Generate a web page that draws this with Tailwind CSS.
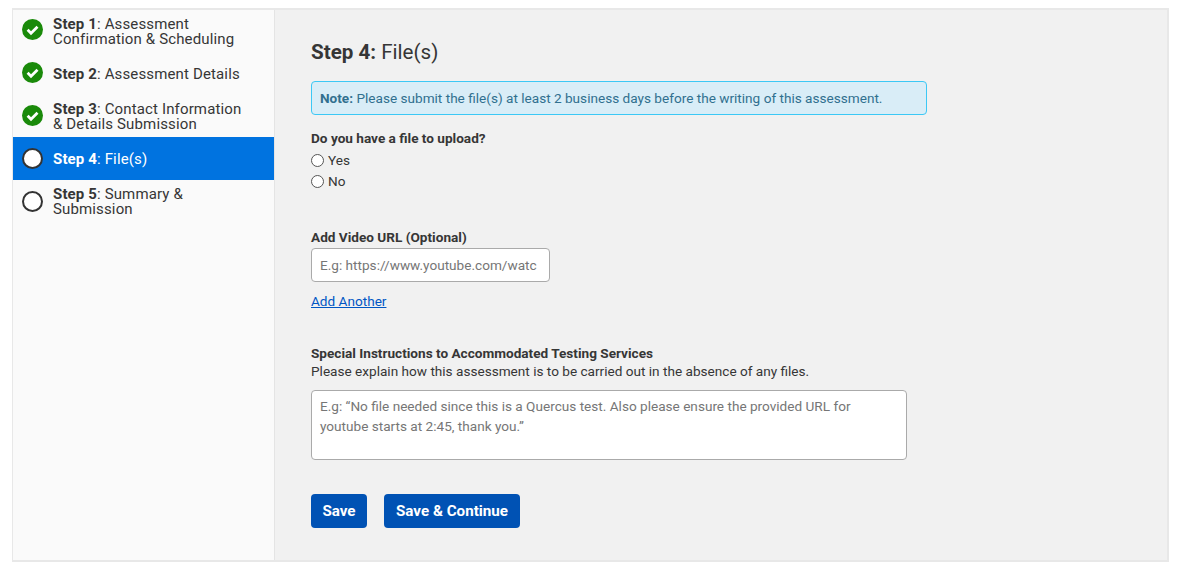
<!DOCTYPE html>
<html lang="en">
  <head>
    <meta charset="UTF-8" />
    <meta name="viewport" content="width=device-width, initial-scale=1.0" />
    <title>Step 4: File(s)</title>
    <script src="https://cdn.jsdelivr.net/npm/@tailwindcss/browser@4"></script>
  </head>
  <body class="bg-white font-['Roboto',sans-serif] text-[#363636]">
    <div class="pt-[8px] pl-[12px]">
      <div class="flex w-[1157px] h-[554px] border border-t-2 border-r-2 border-b-2 border-[#e8e8e8]">

        <!-- Steps -->
        <nav class="w-[262px] shrink-0 bg-[#fafafa] border-r border-[#e4e4e4] text-[15px] leading-[15px] tracking-[0.14px]">
          <div class="flex items-center h-[42px] pl-[9px] gap-[10px]">
            <svg class="w-[21px] h-[21px] shrink-0 -mt-[3px]" viewBox="0 0 21 21"><circle cx="10.5" cy="10.5" r="10.5" fill="#1a8a0a"/><path d="M5.6 10.8l3.4 3.4 6.5-6.5" fill="none" stroke="#fff" stroke-width="2.8"/></svg>
            <div class="pt-[2px]"><b class="font-bold">Step 1</b>: Assessment<br />Confirmation &amp; Scheduling</div>
          </div>
          <div class="flex items-center h-[43px] pl-[9px] gap-[10px]">
            <svg class="w-[21px] h-[21px] shrink-0 -mt-[3px]" viewBox="0 0 21 21"><circle cx="10.5" cy="10.5" r="10.5" fill="#1a8a0a"/><path d="M5.6 10.8l3.4 3.4 6.5-6.5" fill="none" stroke="#fff" stroke-width="2.8"/></svg>
            <div class="pt-[2px]"><b class="font-bold">Step 2</b>: Assessment Details</div>
          </div>
          <div class="flex items-center h-[42px] pl-[9px] gap-[10px]">
            <svg class="w-[21px] h-[21px] shrink-0 -mt-[2px]" viewBox="0 0 21 21"><circle cx="10.5" cy="10.5" r="10.5" fill="#1a8a0a"/><path d="M5.6 10.8l3.4 3.4 6.5-6.5" fill="none" stroke="#fff" stroke-width="2.8"/></svg>
            <div class="pt-[2px]"><b class="font-bold">Step 3</b>: Contact Information<br />&amp; Details Submission</div>
          </div>
          <div class="flex items-center h-[43px] pl-[9px] gap-[10px] bg-[#0073e0] text-white">
            <span class="w-[21px] h-[21px] shrink-0 rounded-full bg-white border-2 border-[#333333]"></span>
            <div class="pt-[2px]"><b class="font-bold">Step 4</b>: File(s)</div>
          </div>
          <div class="flex items-center h-[43px] pl-[9px] gap-[10px]">
            <span class="w-[21px] h-[21px] shrink-0 rounded-full bg-white border-2 border-[#333333]"></span>
            <div><b class="font-bold">Step 5</b>: Summary &amp;<br />Submission</div>
          </div>
        </nav>

        <!-- Form -->
        <main class="flex-1 bg-[#f1f1f1] pl-[36px] pt-[30px] text-[13.6px]">
          <h2 class="text-[20.6px] leading-[24px] font-normal"><b class="font-bold">Step 4:</b> File(s)</h2>

          <div class="mt-[17px] w-[616px] h-[34px] flex items-center px-[8px] rounded-[4px] border border-[#3cc8f5] bg-[#d9edf7] text-[#31708f]">
            <p><b class="font-bold">Note:</b> Please submit the file(s) at least 2 business days before the writing of this assessment.</p>
          </div>

          <p class="mt-[13px] leading-[20px] font-bold">Do you have a file to upload?</p>
          <label class="mt-[1px] flex items-center h-[22px] gap-[4px]"><span class="w-[13px] h-[13px] rounded-full bg-white border border-[#555555]"></span>Yes</label>
          <label class="flex items-center h-[21px] gap-[4px]"><span class="w-[13px] h-[13px] rounded-full bg-white border border-[#555555]"></span>No</label>

          <p class="mt-[35px] leading-[20px] font-bold">Add Video URL (Optional)</p>
          <input type="text" placeholder="E.g: https://www.youtube.com/watc" class="mt-[1px] block w-[239px] h-[34px] px-[8px] bg-white border border-[#aaaaaa] rounded-[4px] placeholder:text-[#767676]" />
          <a href="#" class="mt-[9px] block w-fit leading-[20px] text-[#0056c4] underline">Add Another</a>

          <p class="mt-[33px] leading-[18px] font-bold">Special Instructions to Accommodated Testing Services</p>
          <p class="leading-[18px]">Please explain how this assessment is to be carried out in the absence of any files.</p>
          <textarea placeholder="E.g: “No file needed since this is a Quercus test. Also please ensure the provided URL for youtube starts at 2:45, thank you.”" class="mt-[10px] block w-[596px] h-[70px] px-[8px] py-[5px] leading-[20px] resize-none bg-white border border-[#aaaaaa] rounded-[4px] placeholder:text-[#767676]"></textarea>

          <div class="mt-[34px] flex gap-[17px]">
            <button class="h-[34px] w-[56px] rounded-[4px] bg-[#0052b4] text-white text-[15.2px] font-bold">Save</button>
            <button class="h-[34px] w-[136px] rounded-[4px] bg-[#0052b4] text-white text-[15.2px] font-bold">Save &amp; Continue</button>
          </div>
        </main>
      </div>
    </div>
  </body>
</html>
